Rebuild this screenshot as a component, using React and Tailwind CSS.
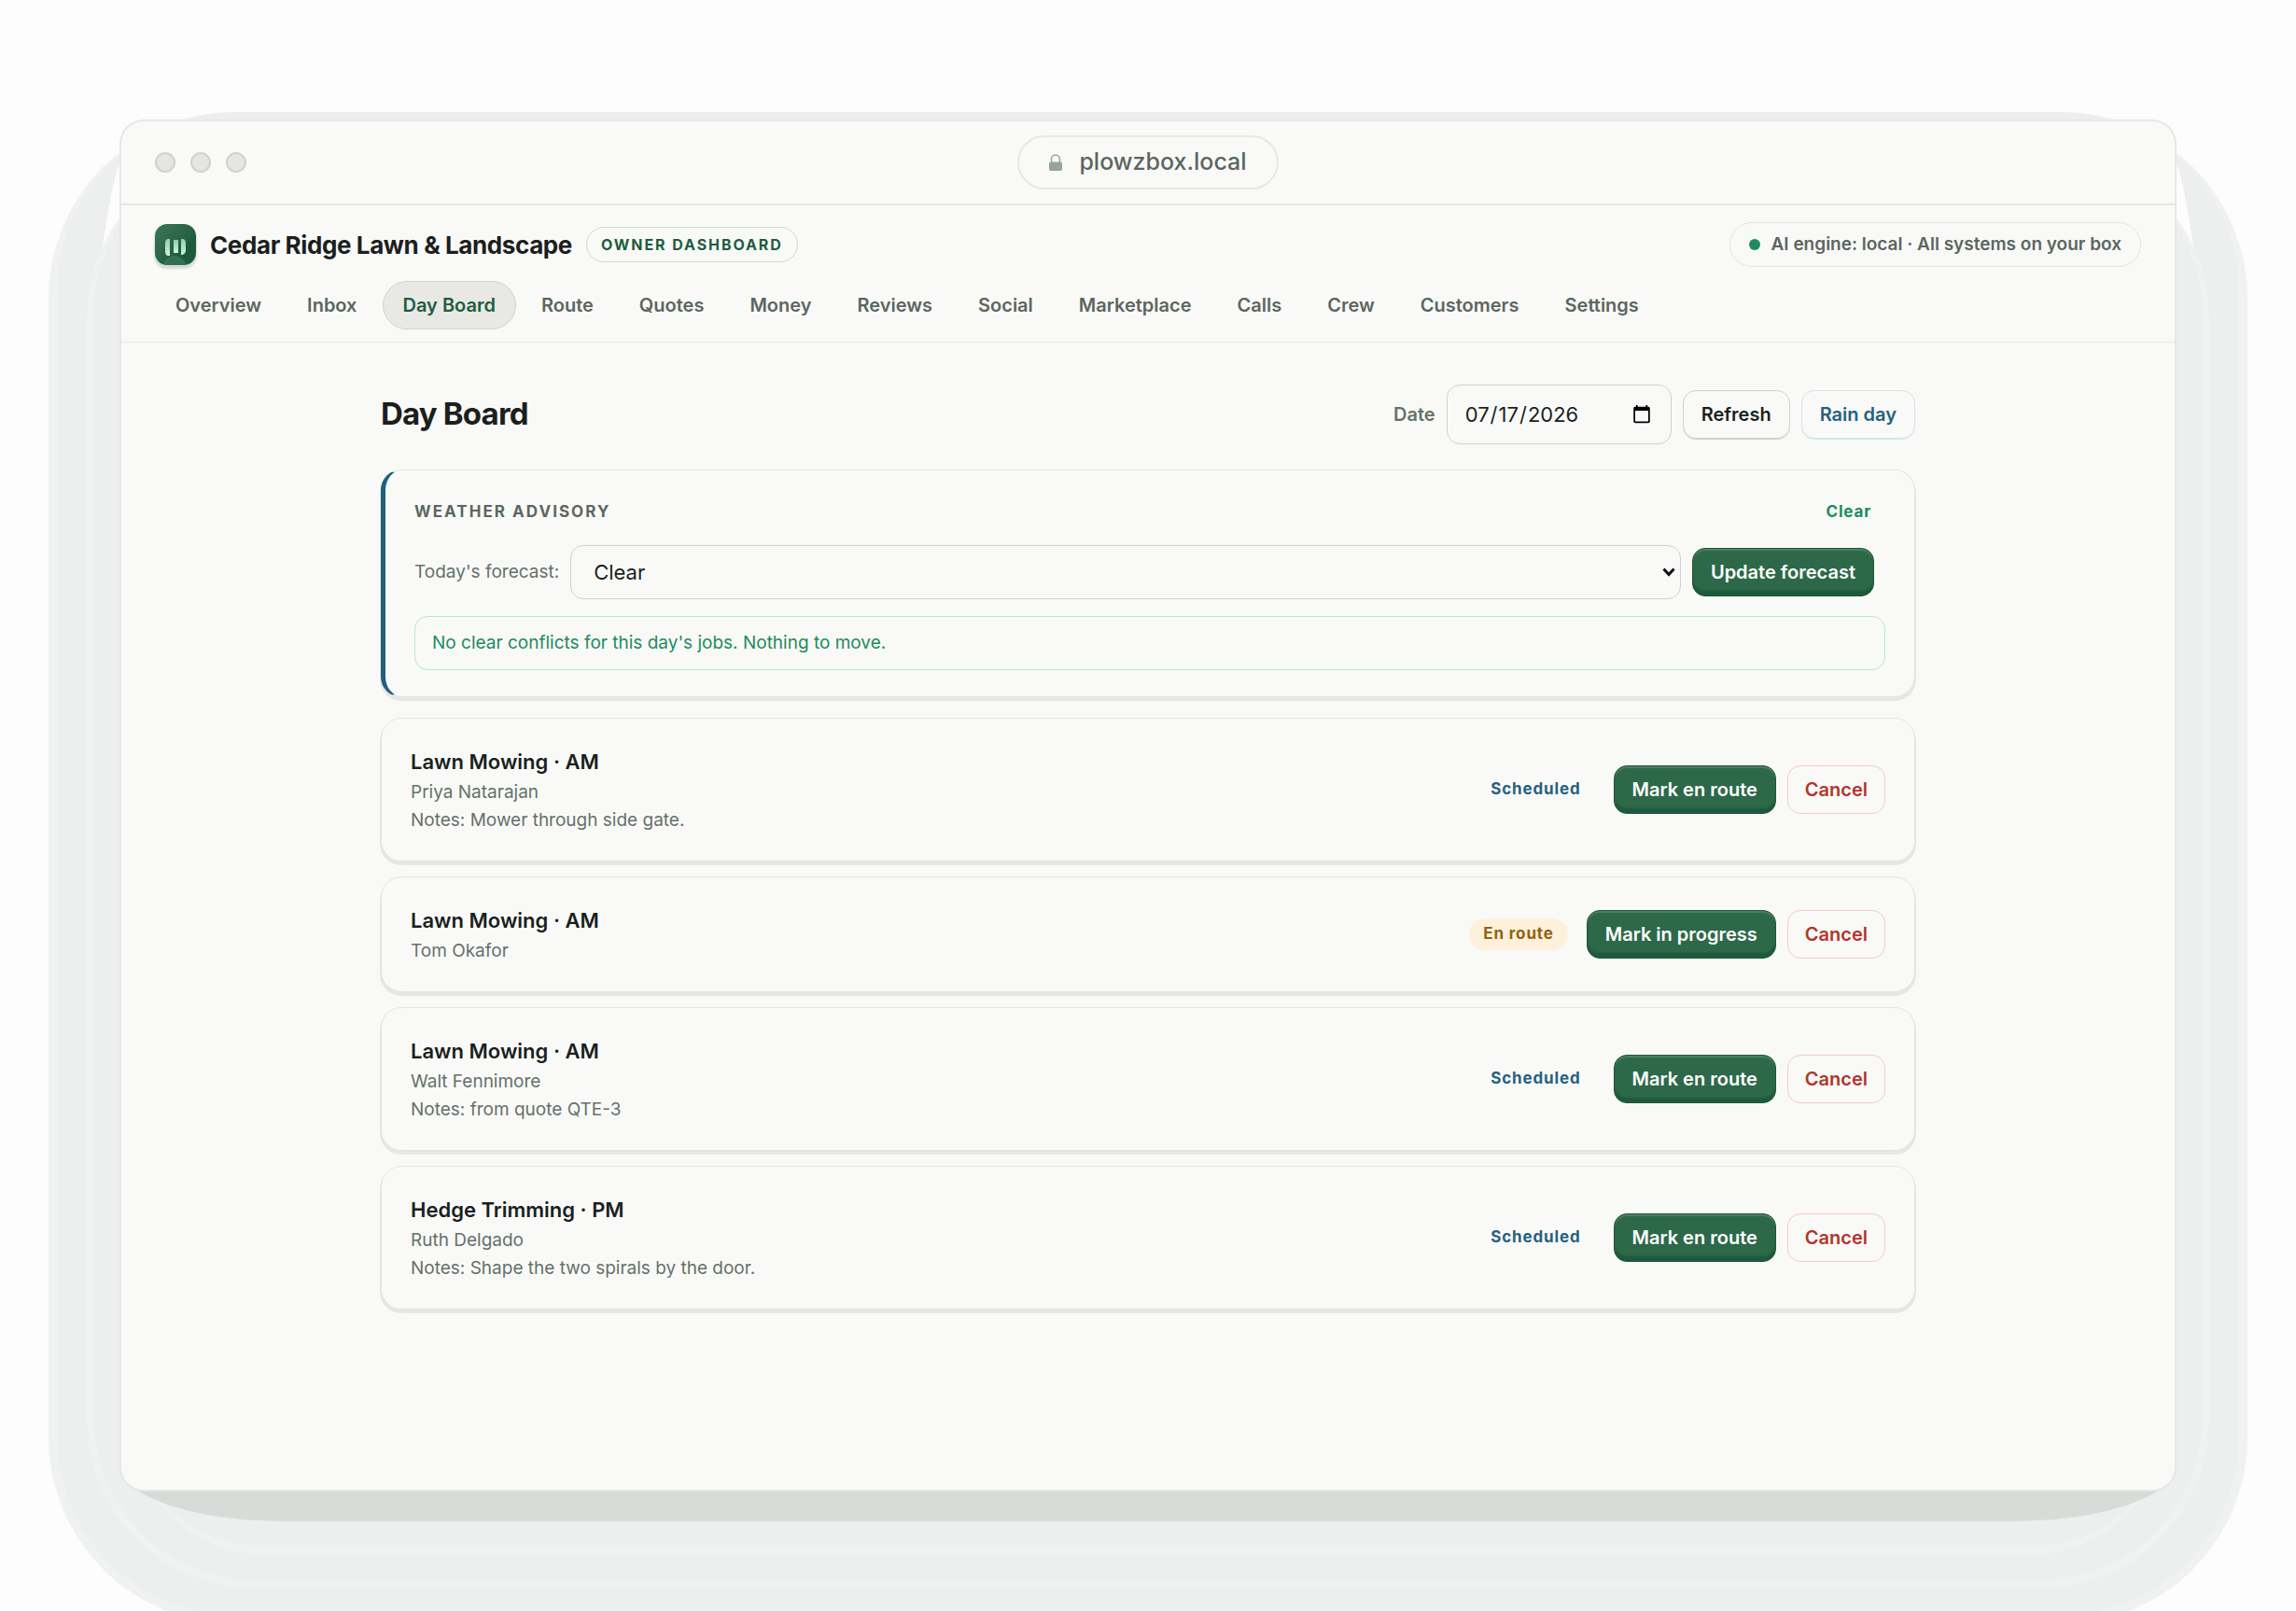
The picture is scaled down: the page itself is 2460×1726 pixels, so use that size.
import React, { useState } from 'react';
import clsx from 'clsx';

const NAV = [
  'Overview', 'Inbox', 'Day Board', 'Route', 'Quotes', 'Money', 'Reviews',
  'Social', 'Marketplace', 'Calls', 'Crew', 'Customers', 'Settings',
];

const JOBS = [
  { id: 1, title: 'Lawn Mowing · AM', customer: 'Priya Natarajan', notes: 'Mower through side gate.', status: 'Scheduled' },
  { id: 2, title: 'Lawn Mowing · AM', customer: 'Tom Okafor', status: 'En route' },
  { id: 3, title: 'Lawn Mowing · AM', customer: 'Walt Fennimore', notes: 'from quote QTE-3', status: 'Scheduled' },
  { id: 4, title: 'Hedge Trimming · PM', customer: 'Ruth Delgado', notes: 'Shape the two spirals by the door.', status: 'Scheduled' },
];

const NEXT_ACTION = {
  Scheduled: 'Mark en route',
  'En route': 'Mark in progress',
};

const CARD = 'rounded-[22px] border border-[#e3e5e1] bg-[#f9faf8] shadow-[0_3px_0_1px_#e6e7e3]';

function LogoMark() {
  return (
    <svg className="size-11 shrink-0 rounded-[13px] shadow-[0_3px_2px_1px_#d5dcd7]" viewBox="0 0 44 44" aria-hidden="true">
      <defs>
        <linearGradient id="mark-bg" x1="0" y1="0" x2="1" y2="1">
          <stop offset="0" stopColor="#3a7659" />
          <stop offset="0.4" stopColor="#2d6849" />
          <stop offset="0.7" stopColor="#1d5a3b" />
          <stop offset="1" stopColor="#1f5c3e" />
        </linearGradient>
        <linearGradient id="mark-bar" x1="0" y1="0" x2="0" y2="1">
          <stop offset="0" stopColor="#8fd0ac" />
          <stop offset="1" stopColor="#d3f0df" />
        </linearGradient>
      </defs>
      <rect width="44" height="44" fill="url(#mark-bg)" />
      <circle cx="21" cy="46" r="12" fill="#4a8465" opacity="0.5" />
      <path d="M16 16H15C12 16 11 18 11 21V29C11 32 12 34 15 34H16Z" fill="url(#mark-bar)" />
      <rect x="20" y="17" width="5" height="14" fill="url(#mark-bar)" />
      <path d="M28 16H29C32 16 33 18 33 21V28C33 31 31 33 28 33Z" fill="url(#mark-bar)" />
    </svg>
  );
}

function LockIcon() {
  return (
    <svg className="h-[18px] w-[14px]" viewBox="0 0 14 18" aria-hidden="true">
      <path d="M2.5 9V5.5a4.5 4.5 0 0 1 9 0V9" fill="none" stroke="#94a69a" strokeWidth="1.6" />
      <rect y="8.5" width="14" height="9.5" rx="2" fill="#94a69a" />
    </svg>
  );
}

function Button({ variant = 'default', children }) {
  return (
    <button
      type="button"
      className={clsx(
        'h-[52px] shrink-0 rounded-[14px] border text-[20px] font-semibold whitespace-nowrap',
        variant === 'danger' ? 'px-[18px]' : 'px-[19px]',
        variant === 'primary' && 'border-[#1b5839] bg-[#2d6849] text-white shadow-[inset_0_2px_1px_#4d8065,inset_0_-5px_2px_#1d5a3b]',
        variant === 'danger' && 'border-[#f0cbc6] text-[#b3352b]',
        variant === 'info' && 'border-[#cfe5e2] text-[#25617f] shadow-[0_1px_0_#d3e6e2]',
        variant === 'default' && 'border-[#cdd2ce] text-[#1b1f1d] shadow-[0_1px_0_#cdd2ce]'
      )}
    >
      {children}
    </button>
  );
}

function Badge({ tone, children }) {
  return (
    <span
      className={clsx(
        'inline-flex h-[34px] items-center rounded-full px-[15px] text-[17px] font-bold tracking-wider',
        tone === 'Clear' && 'text-[#1e8a5f]',
        tone === 'Scheduled' && 'text-[#25617f]',
        tone === 'En route' && 'bg-[#fdf1dc] text-[#94610f]'
      )}
    >
      {children}
    </span>
  );
}

function JobCard({ job }) {
  return (
    <li className={clsx(CARD, 'flex items-center gap-5 px-[31px] py-7')}>
      <div className="min-w-0 flex-1">
        <h3 className="text-[22px] leading-[36px] font-semibold text-[#1b1f1d]">{job.title}</h3>
        <p className="text-[19px] leading-[30px] text-[#66706a]">{job.customer}</p>
        {job.notes && <p className="text-[19px] leading-[30px] text-[#66706a]">Notes: {job.notes}</p>}
      </div>
      <Badge tone={job.status}>{job.status}</Badge>
      <div className="flex gap-3">
        <Button variant="primary">{NEXT_ACTION[job.status]}</Button>
        <Button variant="danger">Cancel</Button>
      </div>
    </li>
  );
}

// Stepped halo behind the browser frame, outermost layer first
function FrameShadow() {
  return (
    <div aria-hidden="true">
      <div className="absolute -inset-x-[76px] -top-2 -bottom-[142px] rounded-[200px] bg-[#f0f2f1]" />
      <div className="absolute -inset-x-[67px] -top-2 -bottom-[133px] rounded-[192px] bg-[#edefee]" />
      <svg className="absolute top-[47px] -left-[19px] h-[92px] w-5" viewBox="0 0 20 92">
        <path d="M20 0C12 12 8 50 0 92L20 62Z" fill="#fdfdfd" />
      </svg>
      <svg className="absolute top-[47px] -right-[19px] h-[92px] w-5" viewBox="0 0 20 92">
        <path d="M0 0C8 12 12 50 20 92L0 62Z" fill="#fdfdfd" />
      </svg>
      <div className="absolute -inset-x-[35px] top-8 -bottom-[103px] rounded-[180px] bg-[#f0f2f1]" />
      <div className="absolute -inset-x-[27px] top-8 -bottom-[95px] rounded-[172px] bg-[#edefee]" />
      <div className="absolute inset-x-1 top-8 -bottom-[69px] rounded-[160px] bg-[#f0f2f1]" />
      <div className="absolute inset-x-1 top-8 -bottom-[59px] rounded-[152px] bg-[#edefee]" />
      <div className="absolute inset-x-0 top-8 -bottom-8 rounded-[180px/60px] bg-[#d9dbd8]" />
    </div>
  );
}

export default function App() {
  const [date, setDate] = useState('2026-07-17');
  const [forecast, setForecast] = useState('Clear');

  return (
    <div className="flex min-h-screen overflow-hidden bg-[#fdfdfd] p-32 font-['Inter',sans-serif] text-[#1b1f1d]">
      <div className="relative flex flex-1">
        <FrameShadow />
        <div className="relative flex flex-1 flex-col overflow-hidden rounded-[26px] border-2 border-[#e6e8e5] bg-[#f9faf8]">
          <div className="grid h-[90px] grid-cols-[1fr_auto_1fr] items-center border-b-2 border-[#e6e8e5] px-9">
            <div className="flex gap-4">
              <span className="size-[22px] rounded-full border-2 border-[#cdd4ce] bg-[#e6e5df]" />
              <span className="size-[22px] rounded-full border-2 border-[#cdd4ce] bg-[#e6e5df]" />
              <span className="size-[22px] rounded-full border-2 border-[#cdd4ce] bg-[#e6e5df]" />
            </div>
            <div className="flex h-[58px] items-center gap-[18px] rounded-full border-2 border-[#e6e8e5] px-8 text-[25px] font-medium text-[#5c6660]">
              <LockIcon />
              plowzbox.local
            </div>
          </div>

          <header className="border-b border-[#e6e8e5] px-9 pt-[18px] pb-[13px]">
            <div className="flex items-center justify-between">
              <div className="flex items-center gap-[15px]">
                <LogoMark />
                <span className="text-[26px] font-bold tracking-[-0.015em]">Cedar Ridge Lawn &amp; Landscape</span>
                <span className="flex h-[38px] items-center rounded-full border border-[#cdd8d0] px-[15px] text-[16px] font-bold tracking-[0.12em] text-[#1f5c3e] uppercase">
                  Owner dashboard
                </span>
              </div>
              <div className="flex h-12 items-center gap-3 rounded-full border border-[#e3e5e1] px-5 text-[19px] font-semibold text-[#5c6660]">
                <span className="size-3 rounded-full bg-[#1e8a5f]" />
                AI engine: local · All systems on your box
              </div>
            </div>
            <nav className="mt-[15px] flex gap-[5px]">
              {NAV.map((item) => (
                <a
                  key={item}
                  href="#"
                  aria-current={item === 'Day Board' ? 'page' : undefined}
                  className={clsx(
                    'flex h-[52px] items-center rounded-full border px-[21px] text-[20px] font-semibold',
                    item === 'Day Board'
                      ? 'border-[#cdd4ce] bg-[#e8e9e5] text-[#1f5c3e]'
                      : 'border-transparent text-[#5c6660]'
                  )}
                >
                  {item}
                </a>
              ))}
            </nav>
          </header>

          <main className="mx-auto w-full max-w-[1644px] pt-[45px]">
            <div className="flex items-center justify-between">
              <h1 className="text-[33px] font-bold tracking-tight">Day Board</h1>
              <div className="flex items-center gap-3">
                <label htmlFor="board-date" className="text-[20px] font-semibold text-[#66706a]">Date</label>
                <input
                  id="board-date"
                  type="date"
                  value={date}
                  onChange={(e) => setDate(e.target.value)}
                  className="h-16 w-[241px] rounded-[14px] border border-[#cdd2ce] px-[18px] text-[22px]"
                />
                <Button>Refresh</Button>
                <Button variant="info">Rain day</Button>
              </div>
            </div>

            <section className={clsx(CARD, 'mt-[27px] border-l-[5px] border-l-[#1f607b] py-7 pr-[31px] pl-[31px]')}>
              <div className="flex items-center justify-between">
                <h2 className="text-[17px] font-bold tracking-[0.12em] text-[#5c6660] uppercase">Weather advisory</h2>
                <Badge tone="Clear">Clear</Badge>
              </div>
              <div className="mt-[18px] flex items-center gap-3 pr-3">
                <label htmlFor="forecast" className="text-[19px] whitespace-nowrap text-[#66706a]">Today's forecast:</label>
                <div className="relative flex-1">
                  <select
                    id="forecast"
                    value={forecast}
                    onChange={(e) => setForecast(e.target.value)}
                    className="h-[58px] w-full appearance-none rounded-[14px] border border-[#cdd2ce] px-6 text-[22px]"
                  >
                    <option>Clear</option>
                    <option>Rain</option>
                    <option>Storm</option>
                  </select>
                  <svg className="pointer-events-none absolute top-6 right-[6px] h-[10px] w-[14px]" viewBox="0 0 14 10" aria-hidden="true">
                    <path d="M1.5 1.5L7 7.5L12.5 1.5" fill="none" stroke="#111" strokeWidth="3" />
                  </svg>
                </div>
                <Button variant="primary">Update forecast</Button>
              </div>
              <p className="mt-[18px] flex h-[58px] items-center rounded-[14px] border border-[#bfe0d1] px-[18px] text-[19px] text-[#1e8a5f]">
                No clear conflicts for this day's jobs. Nothing to move.
              </p>
            </section>

            <ul className="mt-[22px] flex flex-col gap-4">
              {JOBS.map((job) => (
                <JobCard key={job.id} job={job} />
              ))}
            </ul>
          </main>
        </div>
      </div>
    </div>
  );
}
